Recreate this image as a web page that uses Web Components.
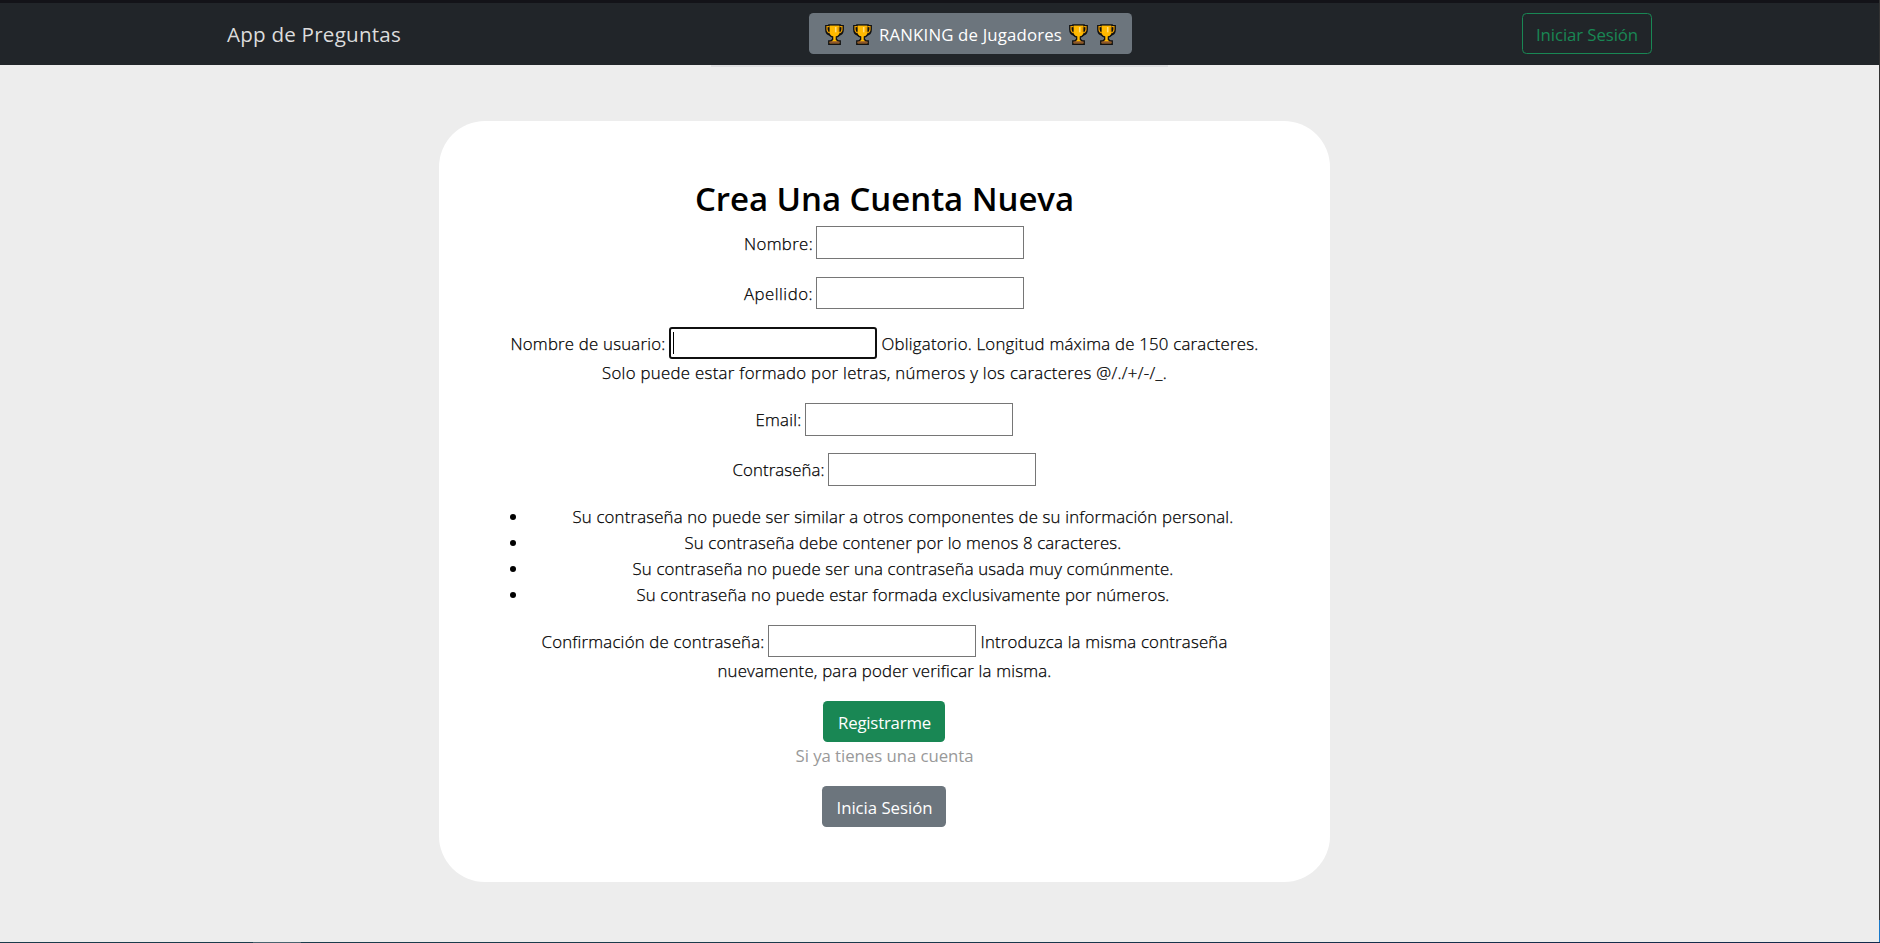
<!DOCTYPE html>
<html lang="es">
<head>
<meta charset="utf-8">
<title>App de Preguntas</title>
<style>
html,body{margin:0;height:100%;overflow:hidden}
body{background:#ededed;color:#000;font:300 16.8px/26px "Open Sans","Noto Sans",sans-serif}
</style>
</head>
<body>
<quiz-page></quiz-page>
<script>
// Registers an element whose shadow root is cloned from a template.
const define = (name, html, setup) => {
  const t = document.createElement('template');
  t.innerHTML = html;
  customElements.define(name, class extends HTMLElement {
    connectedCallback() {
      if (this.shadowRoot) return;
      this.attachShadow({ mode: 'open' }).append(t.content.cloneNode(true));
      if (setup) setup(this, this.shadowRoot);
    }
  });
};

// One line of text, tracked so that it fills the width in its "w" attribute.
define('text-run', `<style>:host{display:block;flex:none;white-space:pre}span{display:inline-block;margin-left:var(--bearing,0)}</style><span><slot></slot></span>`,
  (el, root) => {
    const w = +el.getAttribute('w'), span = root.querySelector('span');
    el.style.width = w + 'px';
    const fit = () => {
      span.style.letterSpacing = '0px';
      const n = el.textContent.length;
      span.style.letterSpacing = ((w - span.getBoundingClientRect().width) / n) + 'px';
    };
    fit();
    requestAnimationFrame(fit);
  });

define('trophy-icon', `<style>:host{display:block;width:19px;height:21px;flex:none}svg{display:block}</style>
<svg width="19" height="21" viewBox="0 0 19 21">
<path d="M4.500 2.700H1.800v2.700c0 2.700 1.300 4.300 4 4.600M14.500 2.700h2.700v2.700c0 2.700-1.300 4.300-4 4.600" fill="none" stroke="#111" stroke-width="3.400"/>
<path d="M4 1h11v6.500c0 3.200-1.400 4.900-3.800 5.600v2.300l2.100 1.700h1.800v3H3.900v-3h1.800l2.100-1.700v-2.300C5.400 12.400 4 10.700 4 7.500z" fill="#ffb900" stroke="#111" stroke-width="1.600"/>
<path d="M4.300 2.600H2v2.700c0 2 .9 3.200 2.900 3.500M14.700 2.600H17v2.700c0 2-.9 3.200-2.900 3.500" fill="none" stroke="#e69a00" stroke-width="1.200"/>
<path d="M4.600 1.700h9.800v5.800c0 3-1.500 4.700-4.900 4.900-3.400-.2-4.900-1.900-4.900-4.900z" fill="#ffb900"/>
<path d="M3.700 3.600v4M15.300 3.600v4" stroke="#111" stroke-width="1.200"/>
<path d="M10.700 3v5.300" stroke="#ffdc78" stroke-width="1.500"/>
<path d="M13.200 2.800v5.400" stroke="#db8f00" stroke-width="1"/>
<path d="M8.500 12.300h2v3.500l1.700 1.700H6.800l1.700-1.700z" fill="#ffb900"/>
<path d="M4.500 17.300h10v2.200h-10z" fill="#8e562e"/></svg>`);

define('app-button', `<style>
:host{display:flex;box-sizing:border-box;flex:none;justify-content:center;align-items:center;height:41px;gap:9px;border-radius:4.5px;color:#fff;font-weight:400;background:#6c757d;-webkit-text-stroke:0}
:host([kind=success]){background:#198754}
:host([kind=outline]){background:none;border:1px solid #198754;color:#198754}
::slotted(text-run){padding-top:3px;margin:0 -2px}
::slotted(trophy-icon){position:relative;top:1px}
</style><slot></slot>`, el => { el.style.width = el.getAttribute('w') + 'px'; });

define('nav-bar', `<style>
:host{display:block;background:#212529;border-top:3px solid #131318;height:62px}
nav{display:grid;grid-template-columns:582px 323px 1fr;padding:10px 227px 0 227px;align-items:start;height:41px}
.brand{color:#dcdcdc;font-weight:400;font-size:20.6px;line-height:30px;padding-top:6px}
.login{justify-self:end}
hr{border:0;margin:11px 0 0 711px;width:457px;height:2px;background:#dedee0}
</style>
<nav><text-run class="brand" w="174">App de Preguntas</text-run>
<app-button w="323"><trophy-icon></trophy-icon><trophy-icon></trophy-icon><text-run w="183">RANKING de Jugadores</text-run><trophy-icon></trophy-icon><trophy-icon></trophy-icon></app-button>
<app-button class="login" kind="outline" w="130"><text-run w="102">Iniciar Sesión</text-run></app-button></nav><hr>`);

define('form-input', `<style>
:host{display:flex;box-sizing:border-box;width:208px;align-self:stretch;flex:none;border:1px solid #767676;background:#fff}
:host([focused]){border:2px solid #101010;border-radius:3px;padding:3px 2px}
i{display:none;width:1px;background:#000}
:host([focused]) i{display:block}
</style><i></i>`);

define('form-row', `<style>
:host{display:flex;justify-content:center;align-items:center;gap:4px;height:32px}
:host([tall]){height:33px}
::slotted(text-run){padding-top:2px}
:host(.mt17) ::slotted(text-run){padding-top:0}
</style><slot></slot>`);

define('help-line', `<style>:host{display:flex;justify-content:center;height:26px;margin-top:1px}</style><slot></slot>`);

define('rule-item', `<style>
:host{display:grid;grid-template-columns:6px 1fr;height:26px;align-items:center}
i{width:6px;height:6px;border-radius:50%;background:#000}
div{display:flex;justify-content:center;padding-left:30px}
</style><i></i><div><slot></slot></div>`);

define('register-card', `<style>
:host{display:block;box-sizing:border-box;width:891px;height:761px;border-radius:46px;background:#fff;padding:56px 72px 0 70px;--bearing:1px;-webkit-text-stroke:.25px}
h1{margin:0;display:flex;justify-content:center;font-size:33px;line-height:44px;font-weight:600;height:49px;-webkit-text-stroke:0}
form-row{margin-top:18px}
.first{margin-top:0}
.mt17{margin-top:17px}
ul{margin:18px 0 17px;padding:0 0 0 1px}
.btn{display:flex;justify-content:center;margin-top:17px}
.muted{color:#999;font-weight:400;-webkit-text-stroke:0}
</style>
<h1><text-run w="379">Crea Una Cuenta Nueva</text-run></h1>
<form-row class="first" tall><text-run w="69">Nombre:</text-run><form-input></form-input></form-row>
<form-row><text-run w="69">Apellido:</text-run><form-input></form-input></form-row>
<form-row><text-run w="155">Nombre de usuario:</text-run><form-input focused></form-input><text-run w="377">Obligatorio. Longitud máxima de 150 caracteres.</text-run></form-row>
<help-line><text-run w="565">Solo puede estar formado por letras, números y los caracteres @/./+/-/_.</text-run></help-line>
<form-row class="mt17" tall><text-run w="46">Email:</text-run><form-input></form-input></form-row>
<form-row class="mt17" tall><text-run w="92">Contraseña:</text-run><form-input></form-input></form-row>
<ul>
<rule-item><text-run w="661">Su contraseña no puede ser similar a otros componentes de su información personal.</text-run></rule-item>
<rule-item><text-run w="437">Su contraseña debe contener por lo menos 8 caracteres.</text-run></rule-item>
<rule-item><text-run w="541">Su contraseña no puede ser una contraseña usada muy comúnmente.</text-run></rule-item>
<rule-item><text-run w="533">Su contraseña no puede estar formada exclusivamente por números.</text-run></rule-item>
</ul>
<form-row class="first"><text-run w="223">Confirmación de contraseña:</text-run><form-input></form-input><text-run w="247">Introduzca la misma contraseña</text-run></form-row>
<help-line><text-run w="334">nuevamente, para poder verificar la misma.</text-run></help-line>
<div class="btn"><app-button kind="success" w="122"><text-run w="93">Registrarme</text-run></app-button></div>
<help-line class="muted"><text-run w="178">Si ya tienes una cuenta</text-run></help-line>
<div class="btn"><app-button w="124"><text-run w="96">Inicia Sesión</text-run></app-button></div>`);

define('quiz-page', `<style>
:host{display:grid;grid-template-columns:1fr 1px;grid-template-rows:1fr 1px;height:943px;width:1880px}
main{padding-top:56px;padding-left:439px}
.side{background:linear-gradient(#333 0 920px,#1979ca 920px)}
.foot{grid-column:1/3;background:linear-gradient(90deg,#1b3b4b 253px,#4a626e 253px 301px,#1b3b4b 301px 700px,#14294b)}
</style>
<div><nav-bar></nav-bar><main><register-card></register-card></main></div><div class="side"></div><div class="foot"></div>`);
</script>
</body>
</html>
